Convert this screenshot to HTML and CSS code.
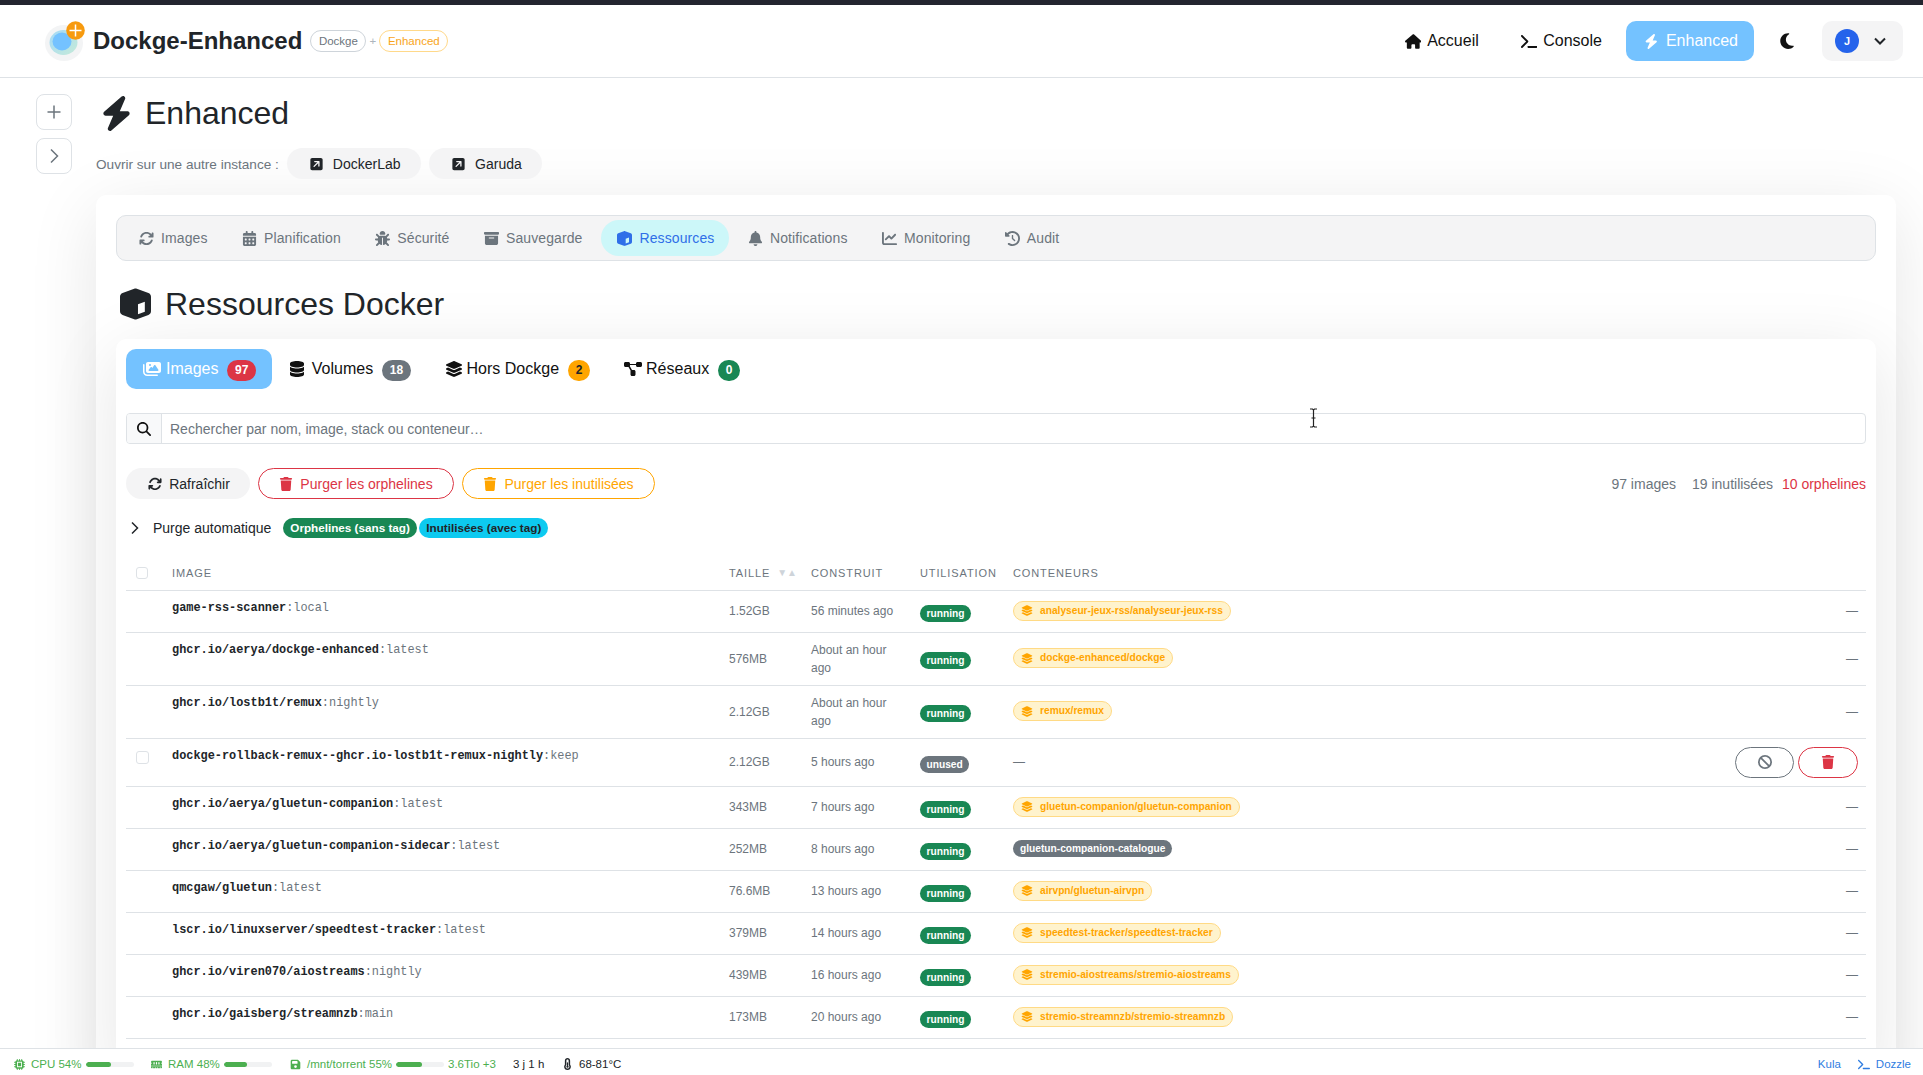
FILE: index.html
```html
<!DOCTYPE html>
<html lang="fr">
  <head>
    <meta charset="UTF-8" />
    <meta name="viewport" content="width=device-width, initial-scale=1.0" />
    <title>Dockge-Enhanced</title>
    <link rel="stylesheet" href="styles.css">
  </head>
  <body>
    <svg class="sprite" xmlns="http://www.w3.org/2000/svg">
      <symbol id="i-bolt" viewBox="0 0 448 512"><path d="M349.4 44.6c5.9-13.7 1.5-29.7-10.6-38.5s-28.6-8-39.9 1.8l-256 224c-10 8.8-13.6 22.9-8.9 35.3S50.7 288 64 288H175.5L98.6 467.4c-5.9 13.7-1.5 29.7 10.6 38.5s28.6 8 39.9-1.8l256-224c10-8.8 13.6-22.9 8.9-35.3s-16.6-20.7-30-20.7H272.5L349.4 44.6z"/></symbol>
      <symbol id="i-house" viewBox="0 0 576 512"><path d="M575.8 255.5c0 18-15 32.1-32 32.1h-32l.7 160.2c0 2.7-.2 5.4-.5 8.1V472c0 22.1-17.9 40-40 40H456c-1.1 0-2.2 0-3.3-.1c-1.4 .1-2.8 .1-4.2 .1H416 392c-22.1 0-40-17.9-40-40V448 384c0-17.7-14.3-32-32-32H256c-17.7 0-32 14.3-32 32v64 24c0 22.1-17.9 40-40 40H160 128.1c-1.5 0-3-.1-4.5-.2c-1.2 .1-2.4 .2-3.6 .2H104c-22.1 0-40-17.9-40-40V360c0-.9 0-1.9 .1-2.8V287.6H32c-18 0-32-14-32-32.1c0-9 3-17 10-24L266.4 8c7-7 15-8 22-8s15 2 21 7L564.8 231.5c8 7 12 15 11 24z"/></symbol>
      <symbol id="i-terminal" viewBox="0 0 576 512"><path d="M9.4 86.6C-3.1 74.1-3.1 53.9 9.4 41.4s32.8-12.5 45.3 0l192 192c12.5 12.5 12.5 32.8 0 45.3l-192 192c-12.5 12.5-32.8 12.5-45.3 0s-12.5-32.8 0-45.3L178.7 256 9.4 86.6zM256 416H544c17.7 0 32 14.3 32 32s-14.3 32-32 32H256c-17.7 0-32-14.3-32-32s14.3-32 32-32z"/></symbol>
      <symbol id="i-moon" viewBox="0 0 384 512"><path d="M223.5 32C100 32 0 132.3 0 256S100 480 223.5 480c60.6 0 115.5-24.2 155.8-63.4c5-4.9 6.3-12.5 3.1-18.7s-10.1-9.7-17-8.5c-9.8 1.7-19.8 2.6-30.1 2.6c-96.9 0-175.5-78.8-175.5-176c0-65.8 36-123.1 89.3-153.3c6.1-3.5 9.2-10.5 7.7-17.3s-7.3-11.9-14.3-12.5c-6.3-.5-12.6-.8-19-.8z"/></symbol>
      <symbol id="i-sync" viewBox="0 0 512 512"><path d="M105.1 202.6c7.7-21.8 20.2-42.3 37.8-59.8c62.5-62.5 163.8-62.5 226.3 0L386.3 160H352c-17.7 0-32 14.3-32 32s14.3 32 32 32H463.5c0 0 0 0 0 0h.4c17.7 0 32-14.3 32-32V80c0-17.7-14.3-32-32-32s-32 14.3-32 32v35.2L414.4 97.6c-87.5-87.5-229.3-87.5-316.8 0C73.2 122 55.6 150.7 44.8 181.4c-5.9 16.7 2.9 34.9 19.5 40.8s34.9-2.9 40.8-19.5zM39 289.3c-5 1.5-9.8 4.2-13.7 8.2c-4 4-6.7 8.8-8.1 14c-.3 1.2-.6 2.5-.8 3.8c-.3 1.7-.4 3.4-.4 5.1V432c0 17.7 14.3 32 32 32s32-14.3 32-32V396.9l17.6 17.5 0 0c87.5 87.4 229.3 87.4 316.7 0c24.4-24.4 42.1-53.1 52.9-83.7c5.9-16.7-2.9-34.9-19.5-40.8s-34.9 2.9-40.8 19.5c-7.7 21.8-20.2 42.3-37.8 59.8c-62.5 62.5-163.8 62.5-226.3 0l-.1-.1L125.6 352H160c17.7 0 32-14.3 32-32s-14.3-32-32-32H48.4c-1.6 0-3.2 .1-4.8 .3s-3.1 .5-4.6 1z"/></symbol>
      <symbol id="i-calendar" viewBox="0 0 448 512"><path d="M128 0c17.7 0 32 14.3 32 32V64H288V32c0-17.7 14.3-32 32-32s32 14.3 32 32V64h48c26.5 0 48 21.5 48 48v48H0V112C0 85.5 21.5 64 48 64H96V32c0-17.7 14.3-32 32-32zM0 192H448V464c0 26.5-21.5 48-48 48H48c-26.5 0-48-21.5-48-48V192zm64 80v32c0 8.8 7.2 16 16 16h32c8.8 0 16-7.2 16-16V272c0-8.8-7.2-16-16-16H80c-8.8 0-16 7.2-16 16zm128 0v32c0 8.8 7.2 16 16 16h32c8.8 0 16-7.2 16-16V272c0-8.8-7.2-16-16-16H208c-8.8 0-16 7.2-16 16zm144-16c-8.8 0-16 7.2-16 16v32c0 8.8 7.2 16 16 16h32c8.8 0 16-7.2 16-16V272c0-8.8-7.2-16-16-16H336zM64 400v32c0 8.8 7.2 16 16 16h32c8.8 0 16-7.2 16-16V400c0-8.8-7.2-16-16-16H80c-8.8 0-16 7.2-16 16zm144-16c-8.8 0-16 7.2-16 16v32c0 8.8 7.2 16 16 16h32c8.8 0 16-7.2 16-16V400c0-8.8-7.2-16-16-16H208zm112 16v32c0 8.8 7.2 16 16 16h32c8.8 0 16-7.2 16-16V400c0-8.8-7.2-16-16-16H336c-8.8 0-16 7.2-16 16z"/></symbol>
      <symbol id="i-bug" viewBox="0 0 512 512"><path d="M256 0c53 0 96 43 96 96v3.6c0 15.7-12.7 28.4-28.4 28.4H188.4c-15.7 0-28.4-12.7-28.4-28.4V96c0-53 43-96 96-96zM41.4 105.4c12.5-12.5 32.8-12.5 45.3 0l64 64c.7 .7 1.3 1.4 1.9 2.1c14.2-7.3 30.4-11.4 47.5-11.4H312c17.1 0 33.2 4.1 47.5 11.4c.6-.7 1.2-1.4 1.9-2.1l64-64c12.5-12.5 32.8-12.5 45.3 0s12.5 32.8 0 45.3l-64 64c-.7 .7-1.4 1.3-2.1 1.9c6.2 12 10.1 25.3 11.1 39.5H480c17.7 0 32 14.3 32 32s-14.3 32-32 32H416c0 24.6-5.5 47.8-15.4 68.6c2.2 1.3 4.2 2.9 6 4.8l64 64c12.5 12.5 12.5 32.8 0 45.3s-32.8 12.5-45.3 0l-63.1-63.1c-24.5 21.8-55.8 36.2-90.3 39.6V240c0-8.8-7.2-16-16-16s-16 7.2-16 16V479.2c-34.5-3.4-65.8-17.8-90.3-39.6L86.6 502.6c-12.5 12.5-32.8 12.5-45.3 0s-12.5-32.8 0-45.3l64-64c1.9-1.9 3.9-3.4 6-4.8C101.5 367.8 96 344.6 96 320H32c-17.7 0-32-14.3-32-32s14.3-32 32-32H96.3c1.1-14.1 5-27.5 11.1-39.5c-.7-.6-1.4-1.2-2.1-1.9l-64-64c-12.5-12.5-12.5-32.8 0-45.3z"/></symbol>
      <symbol id="i-archive" viewBox="0 0 512 512"><path d="M32 32H480c17.7 0 32 14.3 32 32V96c0 17.7-14.3 32-32 32H32C14.3 128 0 113.7 0 96V64C0 46.3 14.3 32 32 32zm0 128H480V416c0 35.3-28.7 64-64 64H96c-35.3 0-64-28.7-64-64V160zm128 80c0 8.8 7.2 16 16 16H336c8.8 0 16-7.2 16-16s-7.2-16-16-16H176c-8.8 0-16 7.2-16 16z"/></symbol>
      <symbol id="i-cube" viewBox="0 0 512 512"><path fill-rule="evenodd" d="M234.5 5.700c13.900-5 29.100-5 43.100 0l192 68.600C495 83.400 512 107.500 512 134.600V377.400c0 27-17 51.200-42.500 60.300l-192 68.600c-13.900 5-29.100 5-43.100 0l-192-68.600C17 428.600 0 404.500 0 377.400V134.600c0-27 17-51.200 42.500-60.300l192-68.600zM297 262L410 218V385L297 426V262z"/></symbol>
      <symbol id="i-bell" viewBox="0 0 448 512"><path d="M224 0c-17.7 0-32 14.3-32 32V51.2C119 66 64 130.6 64 208v18.8c0 47-17.3 92.4-48.5 127.6l-7.4 8.3c-8.4 9.4-10.4 22.9-5.3 34.4S19.4 416 32 416H416c12.6 0 24-7.4 29.2-18.9s3.1-25-5.3-34.4l-7.4-8.3C401.3 319.2 384 273.9 384 226.8V208c0-77.4-55-142-128-156.8V32c0-17.7-14.3-32-32-32zm45.3 493.3c12-12 18.7-28.3 18.7-45.3H224 160c0 17 6.7 33.3 18.7 45.3s28.3 18.7 45.3 18.7s33.3-6.7 45.3-18.7z"/></symbol>
      <symbol id="i-chart" viewBox="0 0 512 512"><path d="M64 64c0-17.7-14.3-32-32-32S0 46.3 0 64V400c0 44.2 35.8 80 80 80H480c17.7 0 32-14.3 32-32s-14.3-32-32-32H80c-8.8 0-16-7.2-16-16V64zm406.6 86.6c12.5-12.5 12.5-32.8 0-45.3s-32.8-12.5-45.3 0L320 210.7l-57.4-57.4c-12.5-12.5-32.8-12.5-45.3 0l-112 112c-12.5 12.5-12.5 32.8 0 45.3s32.8 12.5 45.3 0L240 221.3l57.4 57.4c12.5 12.5 32.8 12.5 45.3 0l128-128z"/></symbol>
      <symbol id="i-history" viewBox="0 0 512 512"><path d="M75 75L41 41C25.9 25.9 0 36.6 0 57.9V168c0 13.3 10.7 24 24 24H134.1c21.4 0 32.1-25.9 17-41l-30.8-30.8C155 85.5 203 64 256 64c106 0 192 86 192 192s-86 192-192 192c-40.8 0-78.6-12.7-109.7-34.4c-14.5-10.1-34.4-6.6-44.6 7.9s-6.6 34.4 7.9 44.6C151.2 495 201.7 512 256 512c141.4 0 256-114.6 256-256S397.4 0 256 0C185.3 0 121.3 28.7 75 75zm181 53c-13.3 0-24 10.7-24 24V256c0 6.4 2.5 12.5 7 17l72 72c9.4 9.4 24.6 9.4 33.9 0s9.4-24.6 0-33.9l-65-65V152c0-13.3-10.7-24-24-24z"/></symbol>
      <symbol id="i-images" viewBox="0 0 576 512"><path d="M160 32c-35.3 0-64 28.7-64 64V320c0 35.3 28.7 64 64 64H512c35.3 0 64-28.7 64-64V96c0-35.3-28.7-64-64-64H160zM396 138.7l96 144c4.9 7.4 5.4 16.8 1.2 24.6S480.9 320 472 320H328 280 200c-9.2 0-17.6-5.3-21.6-13.6s-2.9-18.2 2.9-25.4l64-80c4.6-5.7 11.4-9 18.7-9s14.2 3.3 18.7 9l17.3 21.6 56-84C360.5 132 368 128 376 128s15.5 4 20 10.7zM192 128a32 32 0 1 1 64 0 32 32 0 1 1 -64 0zM48 120c0-13.3-10.7-24-24-24S0 106.7 0 120V344c0 75.1 60.9 136 136 136H456c13.3 0 24-10.7 24-24s-10.7-24-24-24H136c-48.6 0-88-39.4-88-88V120z"/></symbol>
      <symbol id="i-database" viewBox="0 0 448 512"><path d="M448 80v48c0 44.2-100.3 80-224 80S0 172.2 0 128V80C0 35.8 100.3 0 224 0S448 35.8 448 80zM393.2 214.7c20.8-7.4 39.9-16.9 54.8-28.6V288c0 44.2-100.3 80-224 80S0 332.2 0 288V186.1c14.9 11.8 34 21.2 54.8 28.6C99.7 230.7 159.5 240 224 240s124.3-9.3 169.2-25.3zM0 346.1c14.9 11.8 34 21.2 54.8 28.6C99.7 390.7 159.5 400 224 400s124.3-9.3 169.2-25.3c20.8-7.4 39.9-16.9 54.8-28.6V432c0 44.2-100.3 80-224 80S0 476.2 0 432V346.1z"/></symbol>
      <symbol id="i-layers" viewBox="0 0 576 512"><path d="M264.5 5.2c14.9-6.9 32.1-6.9 47 0l218.6 101c8.5 3.9 13.9 12.4 13.9 21.8s-5.4 17.9-13.9 21.8l-218.6 101c-14.9 6.9-32.1 6.9-47 0L45.9 149.8C37.4 145.8 32 137.3 32 128s5.4-17.9 13.9-21.8L264.5 5.2zM476.9 209.6l53.2 24.6c8.5 3.9 13.9 12.4 13.9 21.8s-5.4 17.9-13.9 21.8l-218.6 101c-14.9 6.9-32.1 6.9-47 0L45.9 277.8C37.4 273.8 32 265.3 32 256s5.4-17.9 13.9-21.8l53.2-24.6 152 70.2c23.4 10.8 50.4 10.8 73.8 0l152-70.2zm-152 198.2l152-70.2 53.2 24.6c8.5 3.9 13.9 12.4 13.9 21.8s-5.4 17.9-13.9 21.8l-218.6 101c-14.9 6.9-32.1 6.9-47 0L45.9 405.8C37.4 401.8 32 393.3 32 384s5.4-17.9 13.9-21.8l53.2-24.6 152 70.2c23.4 10.8 50.4 10.8 73.8 0z"/></symbol>
      <symbol id="i-network" viewBox="0 0 576 512"><path d="M0 80C0 53.500 21.500 32 48 32h96c26.500 0 48 21.500 48 48V96H384V80c0-26.500 21.500-48 48-48h96c26.500 0 48 21.500 48 48v64c0 26.500-21.500 48-48 48H432c-26.500 0-48-21.500-48-48V128H192v16c0 7.300-1.700 14.300-4.600 20.500L256 288h64c26.500 0 48 21.500 48 48v96c0 26.500-21.500 48-48 48H256c-26.500 0-48-21.500-48-48V336c0-7.300 1.700-14.300 4.600-20.500L144 192H48c-26.500 0-48-21.500-48-48V80z"/></symbol>
      <symbol id="i-search" viewBox="0 0 512 512"><path d="M416 208c0 45.9-14.9 88.3-40 122.7L502.6 457.4c12.5 12.5 12.5 32.8 0 45.3s-32.8 12.5-45.3 0L330.7 376c-34.4 25.2-76.8 40-122.7 40C93.1 416 0 322.9 0 208S93.1 0 208 0S416 93.1 416 208zM208 352a144 144 0 1 0 0-288 144 144 0 1 0 0 288z"/></symbol>
      <symbol id="i-trash" viewBox="0 0 448 512"><path d="M135.2 17.7L128 32H32C14.3 32 0 46.3 0 64S14.3 96 32 96H416c17.7 0 32-14.3 32-32s-14.3-32-32-32H320l-7.2-14.3C307.4 6.8 296.3 0 284.2 0H163.8c-12.1 0-23.2 6.8-28.6 17.7zM416 128H32L53.2 467c1.6 25.3 22.6 45 47.9 45H346.9c25.3 0 46.3-19.7 47.9-45L416 128z"/></symbol>
      <symbol id="i-ban" viewBox="0 0 512 512"><path d="M367.2 412.5L99.5 144.8C77.1 176.1 64 214.5 64 256c0 106 86 192 192 192c41.5 0 79.9-13.1 111.2-35.5zm45.3-45.3C434.9 335.9 448 297.5 448 256c0-106-86-192-192-192c-41.5 0-79.9 13.1-111.2 35.5L412.5 367.2zM0 256a256 256 0 1 1 512 0A256 256 0 1 1 0 256z"/></symbol>
      <symbol id="i-external" viewBox="0 0 448 512"><path d="M384 32c35.3 0 64 28.7 64 64V416c0 35.3-28.7 64-64 64H64c-35.3 0-64-28.7-64-64V96C0 60.7 28.7 32 64 32H384zM160 144c-13.3 0-24 10.7-24 24s10.7 24 24 24h94.1L119 327c-9.4 9.4-9.4 24.6 0 33.9s24.6 9.4 33.9 0l135-135V328c0 13.3 10.7 24 24 24s24-10.7 24-24V168c0-13.3-10.7-24-24-24H160z"/></symbol>
      <symbol id="i-chip" viewBox="0 0 512 512"><path fill-rule="evenodd" d="M176 24c0-13.3-10.7-24-24-24s-24 10.7-24 24V64c-35.3 0-64 28.7-64 64H24c-13.3 0-24 10.7-24 24s10.7 24 24 24H64v56H24c-13.3 0-24 10.7-24 24s10.7 24 24 24H64v56H24c-13.3 0-24 10.7-24 24s10.7 24 24 24H64c0 35.3 28.7 64 64 64v40c0 13.3 10.7 24 24 24s24-10.7 24-24V448h56v40c0 13.3 10.7 24 24 24s24-10.7 24-24V448h56v40c0 13.3 10.7 24 24 24s24-10.7 24-24V448c35.3 0 64-28.7 64-64h40c13.3 0 24-10.7 24-24s-10.7-24-24-24H448V280h40c13.3 0 24-10.7 24-24s-10.7-24-24-24H448V176h40c13.3 0 24-10.7 24-24s-10.7-24-24-24H448c0-35.3-28.7-64-64-64V24c0-13.3-10.7-24-24-24s-24 10.7-24 24V64H280V24c0-13.3-10.7-24-24-24s-24 10.700-24 24V64H176V24zM140 124H372V388H140V124zM180 170H332V342H180V170z"/></symbol>
      <symbol id="i-memory" viewBox="0 0 576 512"><path d="M64 64C28.7 64 0 92.7 0 128v7.4c0 6.8 4.4 12.6 10.1 16.3C23.3 160.3 32 175.1 32 192s-8.7 31.7-21.9 40.3C4.4 236 0 241.8 0 248.6V320H576V248.6c0-6.8-4.4-12.6-10.1-16.3C552.7 223.7 544 208.9 544 192s8.7-31.7 21.9-40.3c5.7-3.7 10.1-9.5 10.1-16.3V128c0-35.3-28.7-64-64-64H64zM576 352H0v64c0 17.7 14.3 32 32 32H80V416c0-8.8 7.2-16 16-16s16 7.2 16 16v32h96V416c0-8.8 7.2-16 16-16s16 7.2 16 16v32h96V416c0-8.8 7.2-16 16-16s16 7.2 16 16v32h96V416c0-8.8 7.2-16 16-16s16 7.2 16 16v32h48c17.7 0 32-14.3 32-32V352zM192 160v64c0 17.7-14.3 32-32 32s-32-14.3-32-32V160c0-17.7 14.3-32 32-32s32 14.3 32 32zm128 0v64c0 17.7-14.3 32-32 32s-32-14.3-32-32V160c0-17.7 14.3-32 32-32s32 14.3 32 32zm128 0v64c0 17.7-14.3 32-32 32s-32-14.3-32-32V160c0-17.7 14.3-32 32-32s32 14.3 32 32z"/></symbol>
      <symbol id="i-floppy" viewBox="0 0 448 512"><path d="M64 32C28.7 32 0 60.7 0 96V416c0 35.3 28.7 64 64 64H384c35.3 0 64-28.7 64-64V173.3c0-17-6.7-33.3-18.7-45.3L352 50.7C340 38.7 323.7 32 306.7 32H64zm0 96c0-17.7 14.3-32 32-32H288c17.7 0 32 14.3 32 32v64c0 17.7-14.3 32-32 32H96c-17.7 0-32-14.3-32-32V128zM224 288a64 64 0 1 1 0 128 64 64 0 1 1 0-128z"/></symbol>
      <symbol id="i-temp" viewBox="0 0 320 512"><path d="M160 64c-26.5 0-48 21.5-48 48V276.5c0 17.3-7.1 31.9-15.3 42.5C86.2 332.6 80 349.5 80 368c0 44.2 35.8 80 80 80s80-35.8 80-80c0-18.5-6.2-35.4-16.7-48.9c-8.2-10.6-15.3-25.2-15.3-42.5V112c0-26.5-21.5-48-48-48zM48 112C48 50.2 98.1 0 160 0s112 50.1 112 112V276.5c0 6.8 2.9 13.1 7 18.4c14.4 18.9 25 45.3 25 73.1c0 79.5-64.5 144-144 144S16 447.5 16 368c0-27.8 10.6-54.2 25-73.1c4.1-5.3 7-11.6 7-18.4V112zM160 416a48 48 0 1 0 0-96 48 48 0 1 0 0 96zm0-240c-13.3 0-24 10.7-24 24V336c0 13.3 10.7 24 24 24s24-10.7 24-24V200c0-13.3-10.7-24-24-24z"/></symbol>
      <linearGradient id="logo-blob" x1="0" y1="0" x2="1" y2="1">
        <stop offset="0" stop-color="#a5daf8" />
        <stop offset="1" stop-color="#c5ead8" />
      </linearGradient>
    </svg>

    <div class="top-strip"></div>

    <header class="navbar">
      <svg class="logo" viewBox="0 0 40 40" aria-hidden="true">
        <ellipse cx="19" cy="22" rx="19" ry="18" fill="#f3f4f5" />
        <ellipse cx="18.500" cy="21.500" rx="14" ry="12.500" fill="url(#logo-blob)" />
        <ellipse cx="17" cy="20.500" rx="9.500" ry="9" fill="#74c2ff" />
        <circle cx="30.500" cy="9.500" r="9.300" fill="#f79a0e" />
        <path d="M30.500 3.500v12M24.500 9.500h12" stroke="#fff" stroke-width="1.500" />
      </svg>
      <span class="brand">Dockge-Enhanced</span>
      <span class="brand-pill">Dockge</span>
      <span class="brand-plus">+</span>
      <span class="brand-pill brand-pill-orange">Enhanced</span>

      <nav class="nav-links">
        <a class="nav-link"><svg class="nav-icon"><use href="#i-house" /></svg>Accueil</a>
        <a class="nav-link"><svg class="nav-icon"><use href="#i-terminal" /></svg>Console</a>
        <a class="nav-link nav-link-active"><svg class="nav-icon"><use href="#i-bolt" /></svg>Enhanced</a>
        <button class="theme-toggle"><svg class="moon"><use href="#i-moon" /></svg></button>
        <div class="user-menu">
          <span class="avatar">J</span>
          <svg class="user-chevron" viewBox="0 0 12 8"><path d="M1 1.500l5 5 5-5" fill="none" stroke="currentColor" stroke-width="2" /></svg>
        </div>
      </nav>
    </header>

    <main class="page">
      <aside class="side-buttons">
        <button class="side-button"><svg viewBox="0 0 16 16"><path d="M8 1.500v13M1.500 8h13" fill="none" stroke="currentColor" stroke-width="1.500" /></svg></button>
        <button class="side-button"><svg viewBox="0 0 16 16"><path d="M5 1.500l6.500 6.500L5 14.500" fill="none" stroke="currentColor" stroke-width="1.500" /></svg></button>
      </aside>

      <div class="content">
        <h1 class="page-title"><svg class="page-title-icon"><use href="#i-bolt" /></svg>Enhanced</h1>

        <div class="instances">
          <span class="instances-label">Ouvrir sur une autre instance :</span>
          <a class="instance-pill"><svg class="instance-icon"><use href="#i-external" /></svg>DockerLab</a>
          <a class="instance-pill"><svg class="instance-icon"><use href="#i-external" /></svg>Garuda</a>
        </div>

        <section class="card">
          <div class="section-tabs">
            <a class="section-tab"><svg><use href="#i-sync" /></svg>Images</a>
            <a class="section-tab"><svg><use href="#i-calendar" /></svg>Planification</a>
            <a class="section-tab"><svg><use href="#i-bug" /></svg>Sécurité</a>
            <a class="section-tab"><svg><use href="#i-archive" /></svg>Sauvegarde</a>
            <a class="section-tab section-tab-active"><svg><use href="#i-cube" /></svg>Ressources</a>
            <a class="section-tab"><svg><use href="#i-bell" /></svg>Notifications</a>
            <a class="section-tab"><svg><use href="#i-chart" /></svg>Monitoring</a>
            <a class="section-tab"><svg><use href="#i-history" /></svg>Audit</a>
          </div>

          <h2 class="section-title"><svg class="section-title-icon"><use href="#i-cube" /></svg>Ressources Docker</h2>

          <div class="panel">
            <div class="res-tabs">
              <a class="res-tab res-tab-active"><svg class="res-icon res-icon-images"><use href="#i-images" /></svg>Images<span class="count count-red">97</span></a>
              <a class="res-tab"><svg class="res-icon res-icon-db"><use href="#i-database" /></svg>Volumes<span class="count count-gray">18</span></a>
              <a class="res-tab"><svg class="res-icon"><use href="#i-layers" /></svg>Hors Dockge<span class="count count-orange">2</span></a>
              <a class="res-tab"><svg class="res-icon"><use href="#i-network" /></svg>Réseaux<span class="count count-green">0</span></a>
            </div>

            <div class="search">
              <span class="search-addon"><svg><use href="#i-search" /></svg></span>
              <input class="search-input" type="text" placeholder="Rechercher par nom, image, stack ou conteneur…" />
              <svg class="ibeam" viewBox="0 0 9 20"><path d="M1 1h2.500l1 1 1-1H8M4.500 2v16M1 19h2.500l1-1 1 1H8M2.500 10h4" fill="none" stroke="#222" stroke-width="1.200" /></svg>
            </div>

            <div class="actions-row">
              <button class="pill-btn pill-btn-light"><svg><use href="#i-sync" /></svg>Rafraîchir</button>
              <button class="pill-btn pill-btn-red"><svg><use href="#i-trash" /></svg>Purger les orphelines</button>
              <button class="pill-btn pill-btn-orange"><svg><use href="#i-trash" /></svg>Purger les inutilisées</button>
              <div class="stats">
                <span class="stat-total">97 images</span>
                <span>19 inutilisées</span>
                <span class="stat-red">10 orphelines</span>
              </div>
            </div>

            <div class="purge-row">
              <svg class="purge-chevron" viewBox="0 0 10 14"><path d="M2 1.500L7.500 7 2 12.500" fill="none" stroke="currentColor" stroke-width="1.500" /></svg>
              <span class="purge-label">Purge automatique</span>
              <span class="tag tag-green">Orphelines (sans tag)</span>
              <span class="tag tag-cyan">Inutilisées (avec tag)</span>
            </div>

            <table class="images-table">
              <colgroup>
                <col class="col-check" /><col class="col-image" /><col class="col-size" /><col class="col-built" /><col class="col-usage" /><col /><col class="col-actions" />
              </colgroup>
              <thead>
                <tr>
                  <th><span class="checkbox checkbox-head"></span></th>
                  <th>Image</th>
                  <th><span class="th-sort">Taille <span class="sort-arrows">▼▲</span></span></th>
                  <th>Construit</th>
                  <th>Utilisation</th>
                  <th>Conteneurs</th>
                  <th></th>
                </tr>
              </thead>
              <tbody>
                <tr>
                  <td></td>
                  <td class="cell-image"><span class="image-name">game-rss-scanner</span>:local</td>
                  <td>1.52GB</td>
                  <td>56 minutes ago</td>
                  <td><span class="status status-running">running</span></td>
                  <td><span class="stack-badge"><svg><use href="#i-layers" /></svg>analyseur-jeux-rss/analyseur-jeux-rss</span></td>
                  <td class="cell-actions">—</td>
                </tr>
                <tr>
                  <td></td>
                  <td class="cell-image"><span class="image-name">ghcr.io/aerya/dockge-enhanced</span>:latest</td>
                  <td>576MB</td>
                  <td>About an hour ago</td>
                  <td><span class="status status-running">running</span></td>
                  <td><span class="stack-badge"><svg><use href="#i-layers" /></svg>dockge-enhanced/dockge</span></td>
                  <td class="cell-actions">—</td>
                </tr>
                <tr>
                  <td></td>
                  <td class="cell-image"><span class="image-name">ghcr.io/lostb1t/remux</span>:nightly</td>
                  <td>2.12GB</td>
                  <td>About an hour ago</td>
                  <td><span class="status status-running">running</span></td>
                  <td><span class="stack-badge"><svg><use href="#i-layers" /></svg>remux/remux</span></td>
                  <td class="cell-actions">—</td>
                </tr>
                <tr>
                  <td class="cell-check"><span class="checkbox"></span></td>
                  <td class="cell-image"><span class="image-name">dockge-rollback-remux--ghcr.io-lostb1t-remux-nightly</span>:keep</td>
                  <td>2.12GB</td>
                  <td>5 hours ago</td>
                  <td><span class="status status-unused">unused</span></td>
                  <td>—</td>
                  <td class="cell-actions">
                    <div class="row-buttons">
                      <button class="row-btn row-btn-gray"><svg><use href="#i-ban" /></svg></button>
                      <button class="row-btn row-btn-red"><svg><use href="#i-trash" /></svg></button>
                    </div>
                  </td>
                </tr>
                <tr>
                  <td></td>
                  <td class="cell-image"><span class="image-name">ghcr.io/aerya/gluetun-companion</span>:latest</td>
                  <td>343MB</td>
                  <td>7 hours ago</td>
                  <td><span class="status status-running">running</span></td>
                  <td><span class="stack-badge"><svg><use href="#i-layers" /></svg>gluetun-companion/gluetun-companion</span></td>
                  <td class="cell-actions">—</td>
                </tr>
                <tr>
                  <td></td>
                  <td class="cell-image"><span class="image-name">ghcr.io/aerya/gluetun-companion-sidecar</span>:latest</td>
                  <td>252MB</td>
                  <td>8 hours ago</td>
                  <td><span class="status status-running">running</span></td>
                  <td><span class="plain-badge">gluetun-companion-catalogue</span></td>
                  <td class="cell-actions">—</td>
                </tr>
                <tr>
                  <td></td>
                  <td class="cell-image"><span class="image-name">qmcgaw/gluetun</span>:latest</td>
                  <td>76.6MB</td>
                  <td>13 hours ago</td>
                  <td><span class="status status-running">running</span></td>
                  <td><span class="stack-badge"><svg><use href="#i-layers" /></svg>airvpn/gluetun-airvpn</span></td>
                  <td class="cell-actions">—</td>
                </tr>
                <tr>
                  <td></td>
                  <td class="cell-image"><span class="image-name">lscr.io/linuxserver/speedtest-tracker</span>:latest</td>
                  <td>379MB</td>
                  <td>14 hours ago</td>
                  <td><span class="status status-running">running</span></td>
                  <td><span class="stack-badge"><svg><use href="#i-layers" /></svg>speedtest-tracker/speedtest-tracker</span></td>
                  <td class="cell-actions">—</td>
                </tr>
                <tr>
                  <td></td>
                  <td class="cell-image"><span class="image-name">ghcr.io/viren070/aiostreams</span>:nightly</td>
                  <td>439MB</td>
                  <td>16 hours ago</td>
                  <td><span class="status status-running">running</span></td>
                  <td><span class="stack-badge"><svg><use href="#i-layers" /></svg>stremio-aiostreams/stremio-aiostreams</span></td>
                  <td class="cell-actions">—</td>
                </tr>
                <tr>
                  <td></td>
                  <td class="cell-image"><span class="image-name">ghcr.io/gaisberg/streamnzb</span>:main</td>
                  <td>173MB</td>
                  <td>20 hours ago</td>
                  <td><span class="status status-running">running</span></td>
                  <td><span class="stack-badge"><svg><use href="#i-layers" /></svg>stremio-streamnzb/stremio-streamnzb</span></td>
                  <td class="cell-actions">—</td>
                </tr>
              </tbody>
            </table>
          </div>
        </section>
      </div>
    </main>

    <footer class="status-bar">
      <div class="metric metric-green metric-cpu"><svg><use href="#i-chip" /></svg>CPU 54%<span class="meter"><span class="meter-fill" style="width: 54%"></span></span></div>
      <div class="metric metric-green metric-ram"><svg><use href="#i-memory" /></svg>RAM 48%<span class="meter"><span class="meter-fill" style="width: 48%"></span></span></div>
      <div class="metric metric-green metric-disk"><svg><use href="#i-floppy" /></svg>/mnt/torrent 55%<span class="meter"><span class="meter-fill" style="width: 55%"></span></span>3.6Tio +3</div>
      <div class="metric metric-uptime">3 j 1 h</div>
      <div class="metric metric-temp"><svg><use href="#i-temp" /></svg>68-81°C</div>
      <div class="status-links">
        <a>Kula</a>
        <a><svg><use href="#i-terminal" /></svg>Dozzle</a>
      </div>
    </footer>
  </body>
</html>
```

FILE: styles.css
```css
* {
  margin: 0;
  padding: 0;
  box-sizing: border-box;
}

body {
  height: 100vh;
  display: flex;
  flex-direction: column;
  overflow: hidden;
  background: #fff;
  color: #212529;
  font-family: "Liberation Sans", Arial, sans-serif;
  font-size: 14px;
}

svg {
  fill: currentColor;
  flex-shrink: 0;
}

button {
  font-family: inherit;
  background: none;
  border: none;
}

.sprite {
  position: absolute;
  width: 0;
  height: 0;
}

.top-strip {
  height: 5px;
  background: #23252f;
  flex-shrink: 0;
}

/* navbar */
.navbar {
  height: 73px;
  flex-shrink: 0;
  display: flex;
  align-items: center;
  padding: 0 20px 0 45px;
  border-bottom: 1px solid #dee2e6;
}

.logo {
  width: 40px;
  height: 40px;
  margin-right: 8px;
}

.brand {
  font-size: 24px;
  font-weight: 700;
  margin-right: 8px;
}

.brand-pill {
  height: 22px;
  line-height: 20px;
  padding: 0 7.5px;
  border: 1px solid #ced4da;
  border-radius: 11px;
  font-size: 11.5px;
  color: #6c757d;
}

.brand-pill-orange {
  color: #f8a51b;
  border-color: #ffd98a;
}

.brand-plus {
  width: 13px;
  text-align: center;
  font-size: 11.5px;
  color: #adb5bd;
}

.nav-links {
  margin-left: auto;
  display: flex;
  align-items: center;
}

.nav-link {
  height: 40px;
  display: flex;
  align-items: center;
  gap: 6px;
  padding: 0 16px;
  margin-right: 10px;
  border-radius: 10px;
  font-size: 16px;
  color: #111;
}

.nav-link-active {
  margin-left: -2px;
  margin-right: 0;
  padding-left: 17.5px;
  background: #74c2ff;
  color: #fff;
}

.nav-icon {
  width: 16.5px;
  height: 15px;
}

.theme-toggle {
  width: 68px;
  display: flex;
  justify-content: center;
  padding-right: 2px;
  color: #111;
}

.moon {
  width: 16px;
  height: 18px;
}

.user-menu {
  width: 81px;
  height: 40px;
  display: flex;
  align-items: center;
  gap: 15px;
  padding-left: 13px;
  background: #f4f4f5;
  border-radius: 10px;
}

.avatar {
  width: 24px;
  height: 24px;
  display: flex;
  align-items: center;
  justify-content: center;
  border-radius: 50%;
  background: #2563eb;
  color: #fff;
  font-size: 11px;
  font-weight: 700;
}

.user-chevron {
  width: 12px;
  height: 8px;
}

/* page */
.page {
  flex: 1;
  min-height: 0;
  overflow: hidden;
  display: flex;
  gap: 24px;
  padding: 16px 27px 0 36px;
}

.side-buttons {
  width: 36px;
  flex-shrink: 0;
  display: flex;
  flex-direction: column;
  gap: 8px;
}

.side-button {
  width: 36px;
  height: 36px;
  display: flex;
  align-items: center;
  justify-content: center;
  border: 1px solid #dee2e6;
  border-radius: 8px;
  color: #6c757d;
}

.side-button svg {
  width: 16px;
  height: 16px;
}

.content {
  flex: 1;
  min-width: 0;
}

.page-title {
  height: 38px;
  display: flex;
  align-items: center;
  gap: 13px;
  padding-left: 5px;
  font-size: 32px;
  font-weight: 400;
}

.page-title-icon {
  width: 31px;
  height: 35px;
}

.instances {
  margin-top: 16px;
  display: flex;
  align-items: center;
  gap: 8px;
}

.instances-label {
  margin-top: 2px;
  font-size: 13.6px;
  color: #6c757d;
}

.instance-pill {
  height: 31px;
  display: flex;
  align-items: center;
  gap: 10px;
  padding: 0 20.5px 0 23px;
  border-radius: 16px;
  background: #f4f4f5;
  font-size: 14px;
}

.instance-icon {
  width: 13px;
  height: 14px;
}

/* main card */
.card {
  margin-top: 16px;
  padding: 20px;
  background: #fff;
  border-radius: 10px;
  box-shadow: 0 15px 70px rgba(0, 0, 0, 0.1);
  min-height: 1000px;
}

.section-tabs {
  height: 46px;
  display: flex;
  align-items: center;
  gap: 2.5px;
  padding: 0 6px;
  background: #f4f4f5;
  border: 1px solid #dee2e6;
  border-radius: 10px;
}

.section-tab {
  height: 36px;
  display: flex;
  align-items: center;
  gap: 7px;
  padding: 0 16px;
  border-radius: 18px;
  font-size: 14px;
  letter-spacing: 0.1px;
  color: #6c757d;
}

.section-tab svg {
  width: 15px;
  height: 15px;
}

.section-tab-active {
  gap: 7.5px;
  padding: 0 15px 0 16px;
  color: #2f6fe8;
  background-color: #ccf7f9;
  background-image: radial-gradient(circle, rgba(90, 90, 240, 0.16) 0.6px, transparent 0.7px);
  background-size: 8px 8px;
}

.section-title {
  margin-top: 24px;
  height: 38px;
  display: flex;
  align-items: center;
  gap: 14px;
  padding-left: 4px;
  font-size: 32px;
  font-weight: 400;
}

.section-title-icon {
  width: 31px;
  height: 34px;
}

.panel {
  margin-top: 16px;
  padding: 10px 10px 40px;
  background: #fff;
  border-radius: 10px;
  box-shadow: 0 15px 70px rgba(0, 0, 0, 0.1);
}

.res-tabs {
  display: flex;
  gap: 2px;
}

.res-tab {
  height: 40px;
  display: flex;
  align-items: center;
  padding: 0 16px;
  border-radius: 10px;
  font-size: 16px;
  color: #111;
}

.res-tab-active {
  background: #74c2ff;
  color: #fff;
}

.res-icon {
  width: 18px;
  height: 16px;
  margin-right: 4px;
}

.res-icon-images {
  width: 20px;
}

.res-icon-db {
  width: 14px;
  margin-right: 8px;
}

.count {
  margin-left: 9px;
  margin-top: 2px;
  min-width: 22px;
  height: 21px;
  padding: 0 7.5px;
  line-height: 21px;
  border-radius: 11px;
  text-align: center;
  font-size: 12px;
  font-weight: 700;
  color: #fff;
}

.count-red {
  background: #dc3545;
}

.count-gray {
  background: #6c757d;
}

.count-orange {
  background: #ffa500;
  color: #212529;
}

.count-green {
  background: #198754;
}

.search {
  position: relative;
  margin-top: 24px;
  height: 31px;
  display: flex;
  border: 1px solid #dee2e6;
  border-radius: 4px;
}

.search-addon {
  width: 35px;
  display: flex;
  align-items: center;
  justify-content: center;
  background: #f8f9fa;
  border-right: 1px solid #dee2e6;
  border-radius: 3px 0 0 3px;
  color: #111;
}

.search-addon svg {
  width: 14px;
  height: 14px;
}

.search-input {
  flex: 1;
  border: none;
  outline: none;
  padding-left: 8px;
  font-family: inherit;
  font-size: 14px;
  color: #212529;
  background: transparent;
}

.search-input::placeholder {
  color: #6c757d;
  opacity: 1;
}

.ibeam {
  position: absolute;
  left: 1182px;
  top: -6px;
  width: 9px;
  height: 20px;
}

.actions-row {
  margin-top: 24px;
  display: flex;
  align-items: center;
  gap: 8px;
}

.pill-btn {
  height: 31px;
  display: flex;
  align-items: center;
  gap: 7px;
  border-radius: 16px;
  font-size: 14px;
  border: 1px solid transparent;
}

.pill-btn svg {
  width: 14px;
  height: 14px;
}

.pill-btn-light {
  width: 124px;
  justify-content: center;
  padding-left: 2px;
  background: #f4f4f5;
  color: #212529;
}

.pill-btn-red {
  width: 196px;
  justify-content: center;
  border-color: #dc3545;
  color: #dc3545;
}

.pill-btn-orange {
  width: 193px;
  justify-content: center;
  border-color: #ffa500;
  color: #ffa500;
}

.stats {
  margin-left: auto;
  display: flex;
  gap: 9px;
  color: #6c757d;
}

.stat-total {
  margin-right: 7px;
}

.stat-red {
  color: #dc3545;
}

.purge-row {
  margin-top: 19px;
  height: 20px;
  display: flex;
  align-items: center;
  gap: 4px;
}

.purge-chevron {
  width: 10px;
  height: 14px;
  margin-left: 4px;
  margin-right: 9px;
}

.purge-label {
  margin-right: 8px;
}

.tag {
  height: 20px;
  line-height: 20px;
  padding: 0 7px;
  border-radius: 10px;
  font-size: 11.7px;
  font-weight: 700;
}

.tag-green {
  background: #198754;
  color: #fff;
}

.tag-cyan {
  margin-left: -1.5px;
  background: #0dcaf0;
  color: #212529;
}

/* table */
.images-table {
  margin-top: 19px;
  width: 100%;
  table-layout: fixed;
  border-collapse: collapse;
  font-size: 12px;
  line-height: 18px;
  color: #6c757d;
}

.col-check {
  width: 38px;
}

.col-image {
  width: 557px;
}

.col-size {
  width: 82px;
}

.col-built {
  width: 109px;
}

.col-usage {
  width: 93px;
}

.col-actions {
  width: 147px;
}

.images-table th {
  height: 33px;
  padding: 0 8px;
  text-align: left;
  font-size: 11px;
  font-weight: 400;
  letter-spacing: 0.88px;
  text-transform: uppercase;
  border-bottom: 1px solid #dee2e6;
}

.images-table td {
  height: 42px;
  padding: 8px;
  border-bottom: 1px solid #dee2e6;
  vertical-align: middle;
}

.images-table .cell-image {
  vertical-align: top;
  font-family: "Liberation Mono", monospace;
  font-size: 11.9px;
  white-space: nowrap;
}

.images-table .cell-check {
  vertical-align: top;
  padding-top: 12px;
}

.image-name {
  font-weight: 700;
  color: #212529;
}

.th-sort {
  display: flex;
  align-items: center;
}

.sort-arrows {
  margin-left: 7px;
  font-size: 10px;
  letter-spacing: 0;
  color: #ced4da;
}

.checkbox {
  display: block;
  width: 13px;
  height: 13px;
  margin-left: 2px;
  border: 1px solid #dee2e6;
  border-radius: 3px;
  background: #fff;
}

.checkbox-head {
  width: 12px;
  height: 12px;
}

.status {
  display: inline-block;
  height: 17px;
  line-height: 17px;
  margin-top: 4px;
  padding: 0 6.5px;
  border-radius: 9px;
  font-size: 10.2px;
  font-weight: 700;
  color: #fff;
  vertical-align: top;
}

.status-running {
  background: #198754;
}

.status-unused {
  background: #6c757d;
}

.stack-badge {
  display: inline-flex;
  align-items: center;
  gap: 7px;
  height: 20px;
  margin-bottom: 1px;
  padding: 0 7px;
  background: #fff3cd;
  border: 1px solid #ffda85;
  border-radius: 10px;
  font-size: 10.2px;
  font-weight: 700;
  color: #ffa500;
  vertical-align: middle;
}

.stack-badge svg {
  width: 12px;
  height: 11px;
}

.plain-badge {
  display: inline-block;
  height: 17px;
  line-height: 17px;
  margin-bottom: 1px;
  padding: 0 7px;
  border-radius: 9px;
  background: #6c757d;
  font-size: 10.2px;
  font-weight: 700;
  color: #fff;
  vertical-align: middle;
}

.cell-actions {
  text-align: right;
}

.row-buttons {
  display: flex;
  justify-content: flex-end;
  gap: 4px;
}

.row-btn {
  height: 31px;
  display: flex;
  align-items: center;
  justify-content: center;
  border-radius: 16px;
  border: 1px solid;
}

.row-btn svg {
  width: 14px;
  height: 14px;
}

.row-btn-gray {
  width: 59px;
  color: #6c757d;
  border-color: #6c757d;
}

.row-btn-red {
  width: 60px;
  color: #dc3545;
  border-color: #dc3545;
}

/* bottom bar */
.status-bar {
  height: 27px;
  flex-shrink: 0;
  display: flex;
  align-items: center;
  padding: 4px 12px 0 14px;
  background: #fff;
  border-top: 1px solid #dee2e6;
  font-size: 11.5px;
  position: relative;
}

.metric {
  display: flex;
  align-items: center;
  gap: 6px;
}

.metric svg {
  width: 11px;
  height: 11px;
}

.metric-green {
  color: #4caf50;
}

.metric-cpu {
  width: 137px;
}

.metric-ram {
  width: 139px;
}

.metric-disk {
  width: 223px;
}

.metric-uptime {
  width: 50px;
  color: #212529;
}

.metric-temp {
  color: #212529;
  gap: 7px;
}

.metric-temp svg {
  width: 9px;
  height: 12px;
}

.meter {
  width: 48px;
  height: 5px;
  margin-left: -2px;
  margin-right: -2px;
  border-radius: 3px;
  background: #f1f2f3;
  overflow: hidden;
}

.meter-fill {
  display: block;
  height: 100%;
  border-radius: 3px;
  background: #4caf50;
}

.status-links {
  margin-left: auto;
  display: flex;
  align-items: center;
  gap: 17px;
  color: #2f7de1;
}

.status-links a {
  display: flex;
  align-items: center;
  gap: 6px;
}

.status-links svg {
  width: 12px;
  height: 11px;
}
```
